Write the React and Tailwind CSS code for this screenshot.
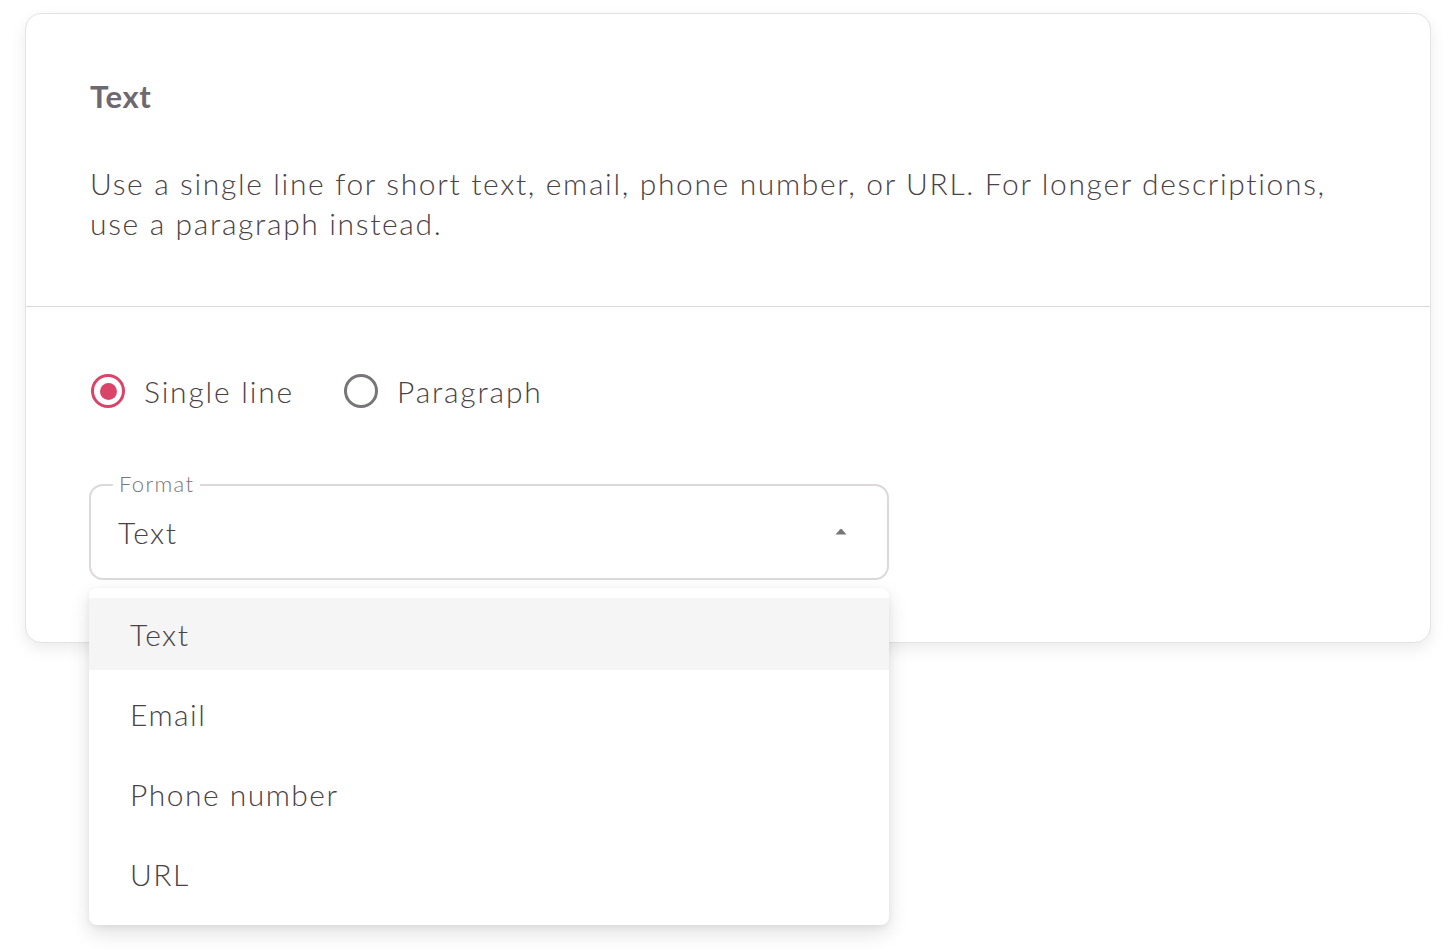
import { useState } from 'react';

const options = ['Text', 'Email', 'Phone number', 'URL'];

function Radio({ checked, label }) {
  return (
    <label className="flex items-center gap-[19px]">
      <span
        className={
          checked
            ? 'flex h-[34px] w-[34px] items-center justify-center rounded-full border-[3px] border-[#d94468]'
            : 'flex h-[34px] w-[34px] items-center justify-center rounded-full border-[3px] border-[#777577]'
        }
      >
        {checked && <span className="h-[17px] w-[17px] rounded-full bg-[#d94468]" />}
      </span>
      <span className="text-[30px] font-light leading-[40px] tracking-[0.06em] text-[#4a4246]">{label}</span>
    </label>
  );
}

export default function App() {
  const [value] = useState('Text');

  return (
    <div className="min-h-[950px] bg-white pl-[25px] pr-[25px] pt-[13px]" style={{ fontFamily: 'Lato, "Open Sans", sans-serif' }}>
      <div className="w-[1406px] rounded-[16px] border border-[#e4e2e4] bg-white shadow-[0_6px_16px_rgba(0,0,0,0.08)]">
        {/* Cabecera */}
        <div className="border-b border-[#dcd9dc] px-[64px] pb-[63px] pt-[62px]">
          <h2 className="text-[31px] font-bold leading-[40px] tracking-[0.02em] text-[#6e6870]">Text</h2>
          <p className="mt-[47px] text-[30px] font-light leading-[40px] tracking-[0.055em] text-[#4a4246]">
            Use a single line for short text, email, phone number, or URL. For longer descriptions,
            use a paragraph instead.
          </p>
        </div>

        {/* Opciones */}
        <div className="px-[65px] pb-[62px] pt-[64px]">
          <div className="flex items-center gap-[50px]">
            <Radio checked label="Single line" />
            <Radio label="Paragraph" />
          </div>

          <div className="relative -ml-[2px] mt-[73px] w-[800px]">
            <div className="relative flex h-[96px] items-center rounded-[14px] border-2 border-[#dcd8dc] pl-[27px] pr-[40px]">
              <span className="absolute -top-[15px] left-[22px] bg-white px-[6px] text-[22px] font-light leading-[26px] tracking-[0.06em] text-[#7a7478]">
                Format
              </span>
              <span className="flex-1 text-[30px] font-light leading-[40px] tracking-[0.05em] text-[#4a4246]">{value}</span>
              <svg width="12" height="7" viewBox="0 0 12 7" className="mb-[2px]">
                <path d="M0.5 6.5 L5.2 1.2 Q6 0.4 6.8 1.2 L11.5 6.5 Z" fill="#777" />
              </svg>
            </div>

            {/* Menú desplegable */}
            <div className="absolute left-0 top-[104px] z-10 w-[800px] rounded-[8px] bg-white pb-[11px] pt-[6px] shadow-[0_8px_20px_rgba(0,0,0,0.12),0_2px_6px_rgba(0,0,0,0.06)]">
              {options.map((o) => (
                <div key={o} className="py-[4px]">
                  <div
                    className={
                      o === value
                        ? 'flex h-[72px] items-center bg-[#f5f5f5] px-[41px] text-[30px] font-light tracking-[0.05em] text-[#4a4246]'
                        : 'flex h-[72px] items-center px-[41px] text-[30px] font-light tracking-[0.05em] text-[#4a4246]'
                    }
                  >
                    {o}
                  </div>
                </div>
              ))}
            </div>
          </div>
        </div>
      </div>
    </div>
  );
}
